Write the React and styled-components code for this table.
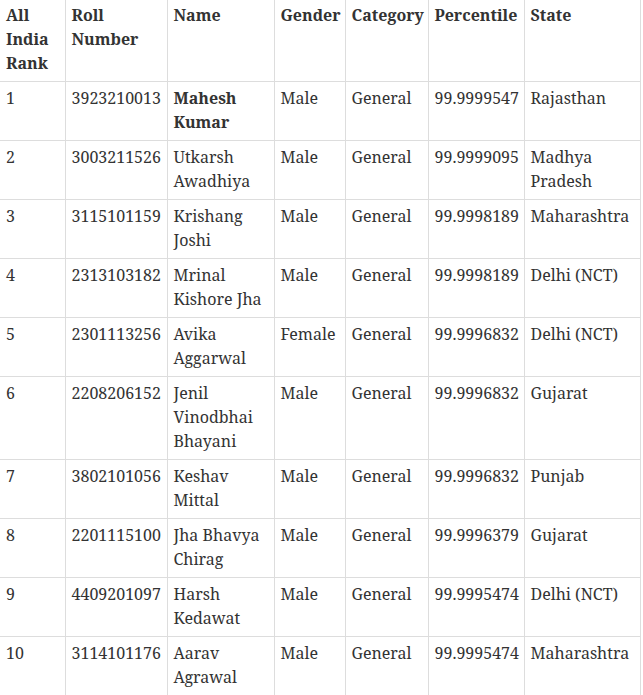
import React from 'react'
import styled, { createGlobalStyle } from 'styled-components';

const GlobalStyle = createGlobalStyle`
  body {
    margin: 0;
    background: #fff;
    font-family: "Noto Serif", "DejaVu Serif", serif;
    color: #333;
  }
`

const columns = [
  { label: 'All India Rank', width: 65 },
  { label: 'Roll Number', width: 102 },
  { label: 'Name', width: 107 },
  { label: 'Gender', width: 71 },
  { label: 'Category', width: 83 },
  { label: 'Percentile', width: 96 },
  { label: 'State', width: 116 },
]

const toppers = [
  ['1', '3923210013', 'Mahesh Kumar', 'Male', 'General', '99.9999547', 'Rajasthan'],
  ['2', '3003211526', 'Utkarsh Awadhiya', 'Male', 'General', '99.9999095', 'Madhya Pradesh'],
  ['3', '3115101159', 'Krishang Joshi', 'Male', 'General', '99.9998189', 'Maharashtra'],
  ['4', '2313103182', 'Mrinal Kishore Jha', 'Male', 'General', '99.9998189', 'Delhi (NCT)'],
  ['5', '2301113256', 'Avika Aggarwal', 'Female', 'General', '99.9996832', 'Delhi (NCT)'],
  ['6', '2208206152', 'Jenil Vinodbhai Bhayani', 'Male', 'General', '99.9996832', 'Gujarat'],
  ['7', '3802101056', 'Keshav Mittal', 'Male', 'General', '99.9996832', 'Punjab'],
  ['8', '2201115100', 'Jha Bhavya Chirag', 'Male', 'General', '99.9996379', 'Gujarat'],
  ['9', '4409201097', 'Harsh Kedawat', 'Male', 'General', '99.9995474', 'Delhi (NCT)'],
  ['10', '3114101176', 'Aarav Agrawal', 'Male', 'General', '99.9995474', 'Maharashtra'],
]

export default function App() {
  return (
    <>
      <GlobalStyle />
      <Wrap>
        <Table>
          <colgroup>
            {columns.map(c => <col key={c.label} style={{ width: c.width }} />)}
          </colgroup>
          <thead>
            <tr>
              {columns.map(c => <Th key={c.label}>{c.label}</Th>)}
            </tr>
          </thead>
          <tbody>
            {toppers.map((row, i) => (
              <tr key={row[1]}>
                {row.map((cell, j) => (
                  <Td key={j} $strong={i === 0 && j === 2}>{cell}</Td>
                ))}
              </tr>
            ))}
          </tbody>
        </Table>
      </Wrap>
    </>
  )
}

// Styled components
const Wrap = styled.div`
  width: 640px;
  margin-top: -1px;
`

const Table = styled.table`
  width: 640px;
  table-layout: fixed;
  border-collapse: collapse;
  font-size: 16px;
  line-height: 24px;
`

const Th = styled.th`
  text-align: left;
  vertical-align: top;
  font-weight: 700;
  padding: 4px 5px 6px 6px;
  border: 1px solid #ddd;
  border-top: none;
  &:first-child { border-left: none; }
`

const Td = styled.td`
  text-align: left;
  vertical-align: top;
  font-weight: ${p => (p.$strong ? 700 : 400)};
  padding: 4px 5px 6px 6px;
  border: 1px solid #ddd;
  &:first-child { border-left: none; }
`
